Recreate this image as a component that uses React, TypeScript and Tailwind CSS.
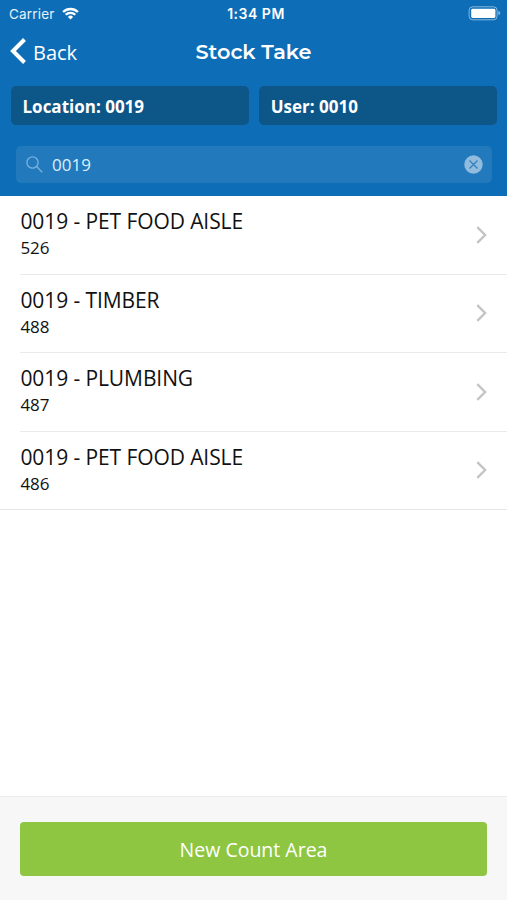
const areas = [
  { name: '0019 - PET FOOD AISLE', count: '526' },
  { name: '0019 - TIMBER', count: '488' },
  { name: '0019 - PLUMBING', count: '487' },
  { name: '0019 - PET FOOD AISLE', count: '486' },
];

function StatusBar() {
  return (
    <div className="grid h-7 grid-cols-[1fr_auto_1fr] items-center pr-[6px] pl-[9px] font-['Inter',sans-serif] text-[13.5px] leading-7">
      <div className="flex items-center gap-[7px] text-white/90">
        <span className="tracking-[0.2px]">Carrier</span>
        <svg className="-mt-px" width="17" height="13" viewBox="0 0 17 13" fill="none" stroke="white" strokeWidth="2.3">
          <path d="M1.1 5 A10.6 10.6 0 0 1 15.9 5" />
          <path d="M3.7 7.8 A6.8 6.8 0 0 1 13.3 7.8" />
          <path d="M8.5 12.5 L5.9 9.9 A3.7 3.7 0 0 1 11.1 9.9 Z" fill="white" stroke="none" />
        </svg>
      </div>
      <span className="pl-[2px] text-[14px] font-semibold tracking-[0.5px] text-white">1:34 PM</span>
      <svg className="-mt-px justify-self-end" width="33" height="15" viewBox="0 0 33 15">
        <rect x="1.1" y="0.8" width="28" height="13" rx="3.6" fill="none" stroke="white" strokeOpacity="0.5" />
        <rect x="3.2" y="2.8" width="24.2" height="9.2" rx="1.4" fill="white" />
        <path d="M30.4 5 Q32.4 5.6 32.4 7.1 Q32.4 8.6 30.4 9.2 Z" fill="white" fillOpacity="0.5" />
      </svg>
    </div>
  );
}

function Pill({ text }: { text: string }) {
  return (
    <div className="flex h-[39px] flex-1 items-center rounded-[5px] bg-[#0d5688] pt-px pl-3 text-[17px] font-bold text-white">
      {text}
    </div>
  );
}

export default function App() {
  return (
    <div className="flex h-[900px] w-[507px] flex-col overflow-hidden bg-white font-['Open_Sans','Noto_Sans',sans-serif] text-[#111]">
      <header className="flex h-[196px] flex-col bg-[#0d6eb7]">
        <StatusBar />
        <div className="grid h-[48px] grid-cols-[1fr_auto_1fr] items-center px-[10px]">
          <div className="flex items-center gap-[7px] text-[20px] text-white">
            <svg className="-mt-[3px]" width="16" height="26" viewBox="0 0 16 26" fill="none" stroke="white" strokeWidth="4">
              <path d="M14.5 1.5 L3 13 L14.5 24.5" />
            </svg>
            <span className="pt-[2px]">Back</span>
          </div>
          <h1 className="font-['Montserrat','Inter',sans-serif] text-[20.8px] font-semibold text-white">Stock Take</h1>
          <span />
        </div>
        <div className="flex gap-[10px] pt-[10.4px] pr-[10px] pl-[10.5px]">
          <Pill text="Location: 0019" />
          <Pill text="User: 0010" />
        </div>
        <div className="mr-[15px] ml-[15.5px] mt-[20.6px] flex h-[37px] items-center rounded-[5px] bg-[#227abd] pr-[9px] pl-[10.5px]">
          <svg width="17" height="17" viewBox="0 0 17 17" fill="none" stroke="#76b0de" strokeWidth="1.4">
            <circle cx="6.5" cy="6.5" r="5.6" />
            <path d="M10.6 10.6 L16.2 16.2" />
          </svg>
          <span className="ml-[9px] flex-1 text-[17px] text-[#dceefb]">0019</span>
          <svg width="19" height="19" viewBox="0 0 19 19">
            <circle cx="9.5" cy="9.5" r="9.2" fill="#91bcde" />
            <path d="M5.5 5.5 L13.5 13.5 M13.5 5.5 L5.5 13.5" stroke="#347fb9" strokeWidth="1.2" />
          </svg>
        </div>
      </header>

      <main className="flex-1">
        <ul className="border-b border-[#e6e6e6]">
          {areas.map((area, i) => (
            <li key={i} className="pl-[20.4px]">
              <div
                className={`flex items-center justify-between pr-[20px] ${i < areas.length - 1 ? 'h-[78.5px] border-b border-[#eaeaea]' : 'h-[77.5px]'}`}
              >
                <div className="pb-[1.5px]">
                  <div className="text-[21px] leading-[28px] tracking-[-0.09px]">{area.name}</div>
                  <div className="text-[17px] leading-[26px]">{area.count}</div>
                </div>
                <svg width="11" height="18" viewBox="0 0 11 18" fill="none" stroke="#c4c4c4" strokeWidth="2.4">
                  <path d="M1.3 1.2 L9.1 9 L1.3 16.8" />
                </svg>
              </div>
            </li>
          ))}
        </ul>
      </main>

      <footer className="h-[104px] border-t border-[#ececec] bg-[#f7f7f7] px-[20px] pt-[25px]">
        <button className="h-[54px] w-full rounded-[4px] bg-[#8ec641] pt-px text-[19.5px] text-white">New Count Area</button>
      </footer>
    </div>
  );
}
